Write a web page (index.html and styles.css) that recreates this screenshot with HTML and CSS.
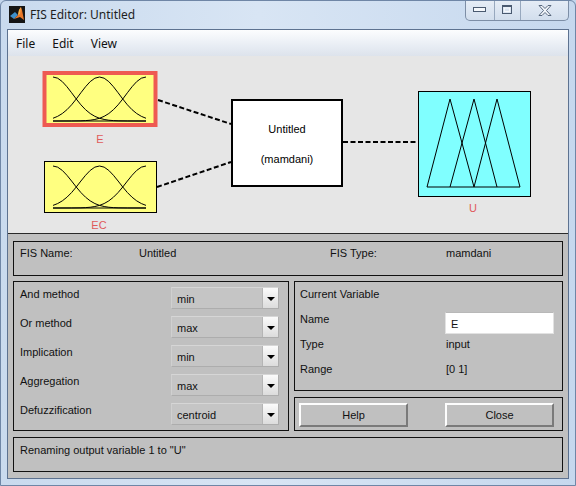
FILE: index.html
```html
<!DOCTYPE html>
<html lang="en">
  <head>
    <meta charset="UTF-8" />
    <meta name="viewport" content="width=device-width, initial-scale=1.0" />
    <title>FIS Editor: Untitled</title>
    <link rel="stylesheet" href="styles.css">
  </head>
  <body>
    <div class="window">
      <div class="titlebar">
        <svg class="app-icon" width="16" height="17" viewBox="0 0 16 17">
          <rect width="16" height="17" fill="#151515" />
          <polygon points="1,10 6,6 9,9 5,13" fill="#3f8fc9" />
          <polygon points="5,13 9,9 10,4 12,1 13,4 15,14 11,11" fill="#e8772a" />
          <polygon points="9,9 10,4 12,1 11,8" fill="#f6b44a" />
        </svg>
        <span class="title">FIS Editor: Untitled</span>
        <div class="controls">
          <div class="ctl min">
            <svg width="14" height="6" viewBox="0 0 14 6"><rect x="0.5" y="0.5" width="12" height="4" fill="#f4f7fb" stroke="#4a5a70" /></svg>
          </div>
          <div class="ctl max">
            <svg width="11" height="10" viewBox="0 0 11 10"><rect x="0.5" y="0.5" width="9" height="8" fill="none" stroke="#4a5a70" /><rect x="2.5" y="3" width="5" height="3.5" fill="none" stroke="#f4f7fb" /><line x1="1" y1="1.5" x2="9" y2="1.5" stroke="#4a5a70" /></svg>
          </div>
          <div class="ctl close">
            <svg width="14" height="11" viewBox="0 0 14 11"><path d="M1 0.5h3l3 3 3-3h3l-4.5 5 4.5 5h-3l-3-3-3 3h-3l4.5-5z" fill="#f4f7fb" stroke="#4a5a70" stroke-width="0.9" /></svg>
          </div>
        </div>
      </div>

      <div class="client">
        <div class="menubar">
          <span>File</span>
          <span>Edit</span>
          <span>View</span>
        </div>

        <div class="diagram">
          <svg width="560" height="177" viewBox="8 56 560 177">
            <!-- connections -->
            <g class="link">
              <line x1="158" y1="100" x2="231" y2="124" />
              <line x1="157" y1="187" x2="231" y2="162" />
              <line x1="343" y1="142" x2="418" y2="142" />
            </g>

            <!-- input E (selected) -->
            <rect class="var-in" x="44.5" y="73" width="111" height="52" stroke="#ee5a52" stroke-width="4" />
            <g class="mf" transform="translate(53 121) scale(93 -44)">
              <line x1="0" y1="0" x2="1" y2="0" />
              <polyline points="0,1 0.05,0.973 0.1,0.895 0.15,0.779 0.2,0.642 0.25,0.5 0.3,0.368 0.35,0.257 0.4,0.17 0.45,0.106 0.5,0.062 0.55,0.035 0.6,0.018 0.65,0.009 0.7,0.004 0.8,0.001 1,0" />
              <polyline points="0,0.062 0.05,0.106 0.1,0.17 0.15,0.257 0.2,0.368 0.25,0.5 0.3,0.642 0.35,0.779 0.4,0.895 0.45,0.973 0.5,1 0.55,0.973 0.6,0.895 0.65,0.779 0.7,0.642 0.75,0.5 0.8,0.368 0.85,0.257 0.9,0.17 0.95,0.106 1,0.062" />
              <polyline points="0,0 0.2,0.001 0.3,0.004 0.35,0.009 0.4,0.018 0.45,0.035 0.5,0.062 0.55,0.106 0.6,0.17 0.65,0.257 0.7,0.368 0.75,0.5 0.8,0.642 0.85,0.779 0.9,0.895 0.95,0.973 1,1" />
            </g>
            <text class="var-label" x="100" y="143">E</text>

            <!-- input EC -->
            <rect class="var-in" x="44.5" y="161.5" width="112" height="51" stroke="#000" />
            <g class="mf" transform="translate(53 208) scale(93 -42)">
              <line x1="0" y1="0" x2="1" y2="0" />
              <polyline points="0,1 0.05,0.973 0.1,0.895 0.15,0.779 0.2,0.642 0.25,0.5 0.3,0.368 0.35,0.257 0.4,0.17 0.45,0.106 0.5,0.062 0.55,0.035 0.6,0.018 0.65,0.009 0.7,0.004 0.8,0.001 1,0" />
              <polyline points="0,0.062 0.05,0.106 0.1,0.17 0.15,0.257 0.2,0.368 0.25,0.5 0.3,0.642 0.35,0.779 0.4,0.895 0.45,0.973 0.5,1 0.55,0.973 0.6,0.895 0.65,0.779 0.7,0.642 0.75,0.5 0.8,0.368 0.85,0.257 0.9,0.17 0.95,0.106 1,0.062" />
              <polyline points="0,0 0.2,0.001 0.3,0.004 0.35,0.009 0.4,0.018 0.45,0.035 0.5,0.062 0.55,0.106 0.6,0.17 0.65,0.257 0.7,0.368 0.75,0.5 0.8,0.642 0.85,0.779 0.9,0.895 0.95,0.973 1,1" />
            </g>
            <text class="var-label" x="99" y="229">EC</text>

            <!-- rule block -->
            <rect x="232" y="100" width="110" height="86" fill="#fff" stroke="#000" stroke-width="2" />
            <text class="sys-label" x="287" y="133">Untitled</text>
            <text class="sys-label" x="287" y="163">(mamdani)</text>

            <!-- output U -->
            <rect class="var-out" x="418.5" y="91.5" width="112" height="105" />
            <g class="mf-tri">
              <line x1="427" y1="187" x2="520" y2="187" />
              <polyline points="427,187 450,99 474,187" />
              <polyline points="450,187 474,99 497,187" />
              <polyline points="474,187 497,99 520,187" />
            </g>
            <text class="var-label" x="473" y="212">U</text>
          </svg>
        </div>

        <div class="panel">
          <div class="box fis-info">
            <span>FIS Name:</span>
            <span>Untitled</span>
            <span>FIS Type:</span>
            <span>mamdani</span>
          </div>

          <div class="middle">
            <div class="box methods">
              <div class="method-row">
                <span>And method</span>
                <div class="combo"><span>min</span><i class="combo-arrow"></i></div>
              </div>
              <div class="method-row">
                <span>Or method</span>
                <div class="combo"><span>max</span><i class="combo-arrow"></i></div>
              </div>
              <div class="method-row">
                <span>Implication</span>
                <div class="combo"><span>min</span><i class="combo-arrow"></i></div>
              </div>
              <div class="method-row">
                <span>Aggregation</span>
                <div class="combo"><span>max</span><i class="combo-arrow"></i></div>
              </div>
              <div class="method-row">
                <span>Defuzzification</span>
                <div class="combo"><span>centroid</span><i class="combo-arrow"></i></div>
              </div>
            </div>

            <div class="right-col">
              <div class="box current-var">
                <div class="cv-title">Current Variable</div>
                <div class="cv-grid">
                  <span>Name</span>
                  <input class="cv-name" type="text" value="E" />
                  <span>Type</span>
                  <span class="cv-value">input</span>
                  <span>Range</span>
                  <span class="cv-value">[0 1]</span>
                </div>
              </div>
              <div class="box buttons">
                <button>Help</button>
                <button>Close</button>
              </div>
            </div>
          </div>

          <div class="box status">Renaming output variable 1 to "U"</div>
        </div>
      </div>
    </div>
  </body>
</html>
```

FILE: styles.css
```css
body {
  margin: 0;
  background-color: #c4d6ec;
  font-family: "Liberation Sans", Arial, sans-serif;
}
.window {
  width: 576px;
  height: 486px;
  box-sizing: border-box;
  background: linear-gradient(90deg, #c9daee 0%, #d8e5f4 45%, #c6d8ee 100%);
  border: 1px solid #6f86a6;
  border-radius: 6px 6px 0 0;
  overflow: hidden;
}
.titlebar {
  height: 28px;
  display: flex;
  align-items: flex-start;
}
.app-icon {
  margin: 5px 0 0 8px;
}
.title {
  margin: 5px 0 0 5px;
  font-family: "Noto Sans", "Open Sans", sans-serif;
  font-size: 12px;
  line-height: 17px;
  color: #1e1e1e;
}
.controls {
  margin-left: auto;
  margin-right: 6px;
  margin-top: -1px;
  display: flex;
  height: 20px;
  border: 1px solid #7d8ea6;
  border-top: none;
  border-radius: 0 0 5px 5px;
  overflow: hidden;
  background: linear-gradient(#e6edf6, #d2deed);
}
.ctl {
  display: flex;
  align-items: center;
  justify-content: center;
}
.ctl.min {
  width: 28px;
  border-right: 1px solid #97a8be;
}
.ctl.max {
  width: 25px;
  border-right: 1px solid #97a8be;
}
.ctl.close {
  width: 47px;
}
.client {
  margin: 0 6px;
  height: 450px;
  box-sizing: border-box;
  border: 1px solid #5d7290;
  display: flex;
  flex-direction: column;
}
.menubar {
  height: 26px;
  display: flex;
  align-items: center;
  gap: 17px;
  padding-left: 8px;
  background: linear-gradient(#fcfdfe, #e8edf4 60%, #dde3ec);
  font-family: "Noto Sans", "Open Sans", sans-serif;
  font-size: 12px;
  color: #111;
}
.diagram {
  height: 177px;
  background-color: #e6e6e6;
}
.diagram svg {
  display: block;
}
.link line {
  stroke: #000;
  stroke-width: 2;
  stroke-dasharray: 5 2.5;
}
.var-in {
  fill: #ffff80;
}
.var-out {
  fill: #80ffff;
  stroke: #000;
}
.mf line,
.mf polyline {
  fill: none;
  stroke: #000;
  stroke-width: 1;
  vector-effect: non-scaling-stroke;
}
.mf-tri line,
.mf-tri polyline {
  fill: none;
  stroke: #000;
  stroke-width: 1;
}
.var-label {
  font-family: "Liberation Sans", Arial, sans-serif;
  font-size: 11px;
  fill: #e05a5a;
  text-anchor: middle;
}
.sys-label {
  font-family: "Liberation Sans", Arial, sans-serif;
  font-size: 11px;
  fill: #000;
  text-anchor: middle;
}
.panel {
  flex: 1;
  background-color: #c0c0c0;
  border-top: 1px solid #2a2a2a;
  padding: 7px 5px 6px 5px;
  display: flex;
  flex-direction: column;
  font-size: 11px;
  line-height: 14px;
  color: #111;
}
.box {
  border: 1px solid #111;
  box-sizing: border-box;
}
.fis-info {
  height: 35px;
  padding: 4px 0 0 6px;
  display: grid;
  grid-template-columns: 119px 191px 116px 1fr;
  align-items: start;
}
.middle {
  margin-top: 5px;
  height: 150px;
  display: grid;
  grid-template-columns: 276px 1fr;
  gap: 5px;
}
.methods {
  padding: 5px 0 0 6px;
  display: flex;
  flex-direction: column;
  gap: 7px;
}
.method-row {
  display: grid;
  grid-template-columns: 151px 108px;
  align-items: start;
}
.combo {
  height: 22px;
  box-sizing: border-box;
  display: flex;
  background-color: #c5c5c5;
  border: 1px solid #adadad;
  border-top-color: #d6d6d6;
  border-left-color: #d0d0d0;
}
.combo span {
  flex: 1;
  padding-left: 5px;
  line-height: 21px;
  padding-top: 1px;
}
.combo-arrow {
  width: 15px;
  background: linear-gradient(#fbfbfb, #dcdcdc);
  border-left: 1px solid #b5b5b5;
  position: relative;
}
.combo-arrow::after {
  content: "";
  position: absolute;
  left: 4px;
  top: 9px;
  border-left: 4px solid transparent;
  border-right: 4px solid transparent;
  border-top: 4px solid #000;
}
.right-col {
  display: flex;
  flex-direction: column;
  gap: 6px;
}
.current-var {
  height: 110px;
  padding: 5px 0 0 5px;
}
.cv-title {
  margin-bottom: 11px;
}
.cv-grid {
  display: grid;
  grid-template-columns: 145px 109px;
  grid-auto-rows: 22px;
  row-gap: 3px;
  align-items: start;
}
.cv-name {
  width: 109px;
  height: 22px;
  box-sizing: border-box;
  margin: 0;
  border: 1px solid #e2e2e2;
  border-top-color: #b8b8b8;
  background-color: #fff;
  padding: 2px 0 0 5px;
  font-family: "Liberation Sans", Arial, sans-serif;
  font-size: 11px;
  color: #111;
}
.cv-value {
  padding-left: 1px;
}
.buttons {
  height: 34px;
  padding: 5px 0 0 4px;
  display: flex;
  gap: 37px;
  align-items: flex-start;
}
.buttons button {
  width: 109px;
  height: 24px;
  margin: 0;
  padding: 0;
  background-color: #c0c0c0;
  border: 2px solid;
  border-color: #fdfdfd #7a7a7a #7a7a7a #fdfdfd;
  font-family: "Liberation Sans", Arial, sans-serif;
  font-size: 11px;
  color: #111;
}
.status {
  margin-top: 6px;
  height: 35px;
  padding: 5px 0 0 6px;
}
```
